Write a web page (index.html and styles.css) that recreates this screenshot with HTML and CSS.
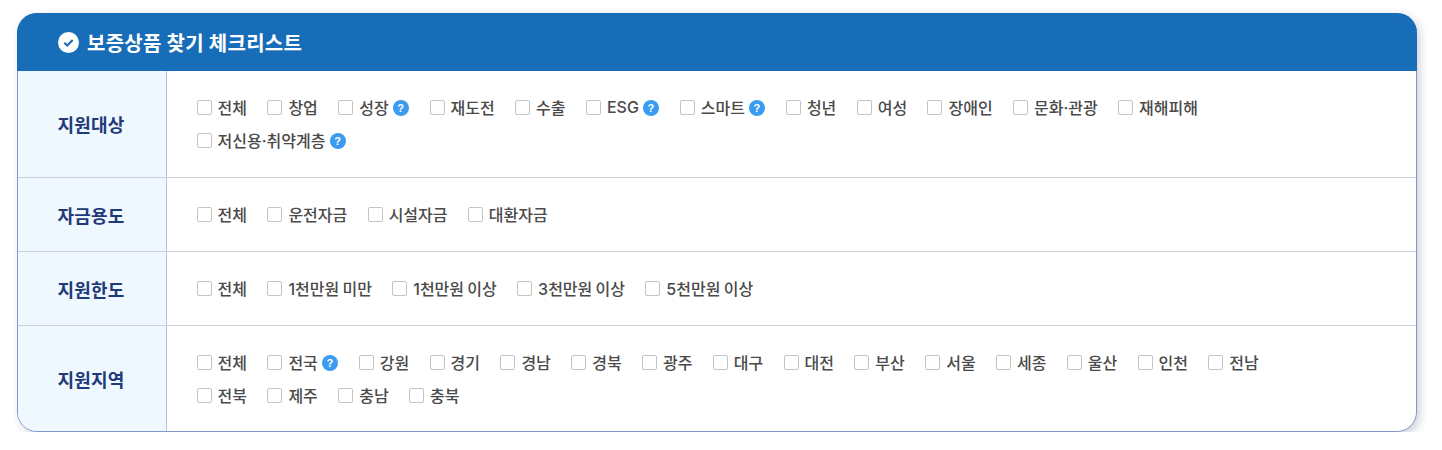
FILE: index.html
```html
<!DOCTYPE html>
<html lang="ko">
<head>
<meta charset="utf-8">
<title>보증상품 찾기 체크리스트</title>
<link rel="stylesheet" href="styles.css">
</head>
<body>
<section class="card">
  <h2 class="head">
    <svg class="head-icon" viewBox="0 0 20 20"><circle cx="10" cy="10" r="10" fill="#fff"/><path d="M6 10.2l2.8 2.6L14 7.6" fill="none" stroke="#186db9" stroke-width="2"/></svg>
    보증상품 찾기 체크리스트
  </h2>
  <div class="row">
    <div class="label">지원대상</div>
    <div class="opts">
      <label class="opt"><i class="box"></i>전체</label>
      <label class="opt"><i class="box"></i>창업</label>
      <label class="opt"><i class="box"></i>성장<b class="help">?</b></label>
      <label class="opt"><i class="box"></i>재도전</label>
      <label class="opt"><i class="box"></i>수출</label>
      <label class="opt"><i class="box"></i>ESG<b class="help">?</b></label>
      <label class="opt"><i class="box"></i>스마트<b class="help">?</b></label>
      <label class="opt"><i class="box"></i>청년</label>
      <label class="opt"><i class="box"></i>여성</label>
      <label class="opt"><i class="box"></i>장애인</label>
      <label class="opt"><i class="box"></i>문화·관광</label>
      <label class="opt"><i class="box"></i>재해피해</label>
      <label class="opt"><i class="box"></i>저신용·취약계층<b class="help">?</b></label>
    </div>
  </div>
  <div class="row">
    <div class="label">자금용도</div>
    <div class="opts">
      <label class="opt"><i class="box"></i>전체</label>
      <label class="opt"><i class="box"></i>운전자금</label>
      <label class="opt"><i class="box"></i>시설자금</label>
      <label class="opt"><i class="box"></i>대환자금</label>
    </div>
  </div>
  <div class="row">
    <div class="label">지원한도</div>
    <div class="opts">
      <label class="opt"><i class="box"></i>전체</label>
      <label class="opt"><i class="box"></i>1천만원 미만</label>
      <label class="opt"><i class="box"></i>1천만원 이상</label>
      <label class="opt"><i class="box"></i>3천만원 이상</label>
      <label class="opt"><i class="box"></i>5천만원 이상</label>
    </div>
  </div>
  <div class="row">
    <div class="label">지원지역</div>
    <div class="opts">
      <label class="opt"><i class="box"></i>전체</label>
      <label class="opt"><i class="box"></i>전국<b class="help">?</b></label>
      <label class="opt"><i class="box"></i>강원</label>
      <label class="opt"><i class="box"></i>경기</label>
      <label class="opt"><i class="box"></i>경남</label>
      <label class="opt"><i class="box"></i>경북</label>
      <label class="opt"><i class="box"></i>광주</label>
      <label class="opt"><i class="box"></i>대구</label>
      <label class="opt"><i class="box"></i>대전</label>
      <label class="opt"><i class="box"></i>부산</label>
      <label class="opt"><i class="box"></i>서울</label>
      <label class="opt"><i class="box"></i>세종</label>
      <label class="opt"><i class="box"></i>울산</label>
      <label class="opt"><i class="box"></i>인천</label>
      <label class="opt"><i class="box"></i>전남</label>
      <label class="opt"><i class="box"></i>전북</label>
      <label class="opt"><i class="box"></i>제주</label>
      <label class="opt"><i class="box"></i>충남</label>
      <label class="opt"><i class="box"></i>충북</label>
    </div>
  </div>
</section>
</body>
</html>
```
FILE: styles.css
```css
* { box-sizing: border-box; }
html, body { margin: 0; background: #fff; }
body {
  padding: 13px 25px 0 17px;
  font-family: Inter, "Noto Sans CJK KR", sans-serif;
}
.card {
  display: flex;
  flex-direction: column;
  width: 1400px;
  height: 419px;
  border: 1px solid #7f97c9;
  border-radius: 20px;
  box-shadow: 3px 3px 8px rgba(40, 50, 90, .22);
  background: #fff;
}
.head {
  display: flex;
  flex: none;
  align-items: center;
  gap: 8px;
  height: 58px;
  margin: -1px -1px 0;
  padding: 0 0 0 41px;
  border-radius: 20px 20px 0 0;
  background: #186db9;
  color: #fff;
  font-size: 20px;
  font-weight: 700;
  letter-spacing: .25px;
}
.head-icon { width: 21px; height: 21px; flex: none; }
.row {
  display: flex;
  flex: none;
  border-bottom: 1px solid #ccd0d8;
}
.row:last-child { flex: 1; border-bottom: 0; }
.row:last-child .label { border-bottom-left-radius: 19px; }
.row:last-child .opts { padding-bottom: 19px; }
.label {
  display: flex;
  align-items: center;
  justify-content: center;
  flex: none;
  width: 149px;
  padding-right: 2px;
  background: #eff7ff;
  border-right: 1px solid #b0c3e0;
  color: #1f3a78;
  font-size: 18px;
  font-weight: 700;
  letter-spacing: .2px;
}
.opts {
  display: flex;
  flex-wrap: wrap;
  flex: 1;
  align-content: flex-start;
  padding: 20px 100px 20px 29.6px;
  column-gap: 20.35px;
}
.opt {
  display: flex;
  align-items: center;
  height: 33px;
  padding-bottom: 2px;
  color: #4a4a4a;
  font-size: 16px;
  font-weight: 500;
  word-spacing: -1px;
}
.box {
  width: 15px;
  height: 15px;
  margin: 2px 6px 0 0;
  border: 1px solid #c4c4c4;
  border-radius: 2px;
  background: #fff;
}
.help {
  display: flex;
  align-items: center;
  justify-content: center;
  width: 16px;
  height: 16px;
  margin: 2px .6px 0 4px;
  border-radius: 50%;
  background: #3a9bf0;
  color: #fff;
  font: 700 11px "Liberation Sans", sans-serif;
}
```
